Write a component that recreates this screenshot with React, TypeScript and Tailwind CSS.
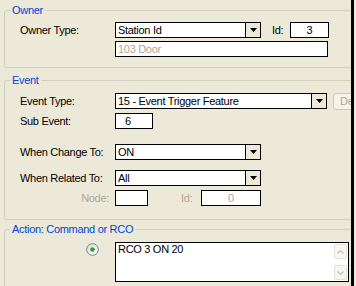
import type { ReactNode } from 'react';

function DropArrow() {
  return (
    <svg width="7" height="4" viewBox="0 0 7 4">
      <path d="M0 0h7L3.5 4z" fill="#000" />
    </svg>
  );
}

function Combo({ value, width }: { value: string; width: string }) {
  return (
    <div className={`flex h-[16px] shrink-0 border border-black bg-white ${width}`}>
      <span className="flex-1 truncate pl-[2px] leading-[14px]">{value}</span>
      <span className="flex w-[15px] items-center justify-center border-l border-black bg-[#ECE9D8]">
        <DropArrow />
      </span>
    </div>
  );
}

function TextBox({ children, className }: { children?: ReactNode; className: string }) {
  return (
    <div className={`h-[16px] shrink-0 border border-black bg-white leading-[14px] ${className}`}>
      {children}
    </div>
  );
}

function Group({ title, className, children }: { title: string; className: string; children: ReactNode }) {
  return (
    <fieldset className={`w-[360px] shrink-0 rounded-[3px] border border-[#D0D0BF] ${className}`}>
      <legend className="ml-[5px] px-[2px] text-[11px] leading-[12px] text-[#0046D5]">{title}</legend>
      {children}
    </fieldset>
  );
}

function Label({ children, muted }: { children: ReactNode; muted?: boolean }) {
  return (
    <span className={`w-[95px] shrink-0 ${muted ? 'pr-[6px] text-right text-[#ACA899]' : ''}`}>{children}</span>
  );
}

function Chevron({ up }: { up?: boolean }) {
  return (
    <svg width="7" height="4" viewBox="0 0 7 4">
      <path d={up ? 'M0.5 3.5L3.5 0.5L6.5 3.5' : 'M0.5 0.5L3.5 3.5L6.5 0.5'} fill="none" stroke="#C9C7BD" strokeWidth="1.4" />
    </svg>
  );
}

export default function App() {
  return (
    <div className="flex h-[286px] w-[356px] overflow-hidden bg-[#ECE9D8] font-['Liberation_Sans',Arial,sans-serif] text-[11px] tracking-[-0.3px] text-black">
      <div className="flex w-[351px] shrink-0 flex-col overflow-hidden pl-[4px]">
        <Group title="Owner" className="mt-[4px]">
          <div className="pb-[10px] pl-[15px] pt-[6px]">
            <div className="flex h-[16px] items-center">
              <Label>Owner Type:</Label>
              <Combo value="Station Id" width="w-[146px]" />
              <span className="ml-[11px] w-[18px]">Id:</span>
              <TextBox className="w-[39px] text-center">3</TextBox>
            </div>
            <div className="mt-[3px] flex">
              <TextBox className="ml-[95px] w-[213px] pl-[2px] text-[#ACA899]">103 Door</TextBox>
            </div>
          </div>
        </Group>

        <Group title="Event" className="mt-[6px]">
          <div className="pb-[13px] pl-[15px] pt-[7px]">
            <div className="flex h-[16px] items-center">
              <Label>Event Type:</Label>
              <Combo value="15 - Event Trigger Feature" width="w-[212px]" />
              <div className="ml-[6px] flex h-[17px] w-[60px] shrink-0 items-center rounded-[3px] border border-[#C9C7BA] bg-[#F5F4EA] pl-[6px] text-[#ACA899]">
                Define...
              </div>
            </div>
            <div className="mt-[4px] flex h-[16px] items-center">
              <Label>Sub Event:</Label>
              <TextBox className="w-[38px] pl-[9px]">6</TextBox>
            </div>
            <div className="mt-[15px] flex h-[16px] items-center">
              <Label>When Change To:</Label>
              <Combo value="ON" width="w-[146px]" />
            </div>
            <div className="mt-[10px] flex h-[16px] items-center">
              <Label>When Related To:</Label>
              <Combo value="All" width="w-[146px]" />
            </div>
            <div className="mt-[4px] flex h-[16px] items-center">
              <Label muted>Node:</Label>
              <TextBox className="w-[33px]" />
              <span className="ml-[33px] w-[20px] text-[#ACA899]">Id:</span>
              <TextBox className="w-[60px] text-center text-[#ACA899]">0</TextBox>
            </div>
          </div>
        </Group>

        <Group title="Action: Command or RCO" className="mt-[3px]">
          <div className="flex pb-[10px] pl-[15px] pt-[7px]">
            <div className="flex w-[95px] shrink-0 justify-end pr-[16px] pt-[1px]">
              <svg width="13" height="13" viewBox="0 0 13 13">
                <defs>
                  <linearGradient id="rb" x1="0" y1="0" x2="1" y2="1">
                    <stop offset="0" stopColor="#DCDAD2" />
                    <stop offset="1" stopColor="#FFFFFF" />
                  </linearGradient>
                </defs>
                <circle cx="6.5" cy="6.5" r="5.8" fill="url(#rb)" stroke="#6F8499" strokeWidth="1" />
                <circle cx="6.5" cy="6.5" r="2.3" fill="#2CA42C" />
              </svg>
            </div>
            <div className="flex h-[40px] w-[234px] shrink-0 border border-black bg-white">
              <span className="flex-1 pl-[2px] leading-[13px]">RCO 3 ON 20</span>
              <div className="my-[1px] mr-[1px] flex w-[13px] flex-col justify-between">
                <span className="flex h-[15px] items-center justify-center rounded-[2px] border border-[#E3E1D6] bg-[#F7F6F1]">
                  <Chevron up />
                </span>
                <span className="flex h-[15px] items-center justify-center rounded-[2px] border border-[#E3E1D6] bg-[#F7F6F1]">
                  <Chevron />
                </span>
              </div>
            </div>
          </div>
        </Group>
      </div>
      <div className="w-[3px] shrink-0 bg-black" />
      <div className="w-[2px] shrink-0 bg-[#ECE9D8]" />
    </div>
  );
}
